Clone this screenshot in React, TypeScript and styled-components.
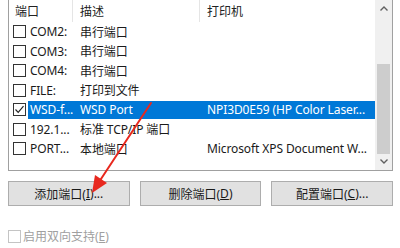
import React from 'react';
import styled, { createGlobalStyle } from 'styled-components';

const GlobalStyle = createGlobalStyle`
  html, body {
    margin: 0;
    padding: 0;
    background: #ffffff;
  }
  body {
    font-family: "Segoe UI", "Noto Sans", "Noto Sans CJK SC", sans-serif;
    font-size: 12px;
    color: #1a1a1a;
  }
`;

const Page = styled.div`
  position: relative;
  width: 400px;
  height: 248px;
  overflow: hidden;
  padding: 0 8px 0 8px;
  box-sizing: border-box;
`;

const ListBox = styled.div`
  display: flex;
  width: 385px;
  height: 171px;
  box-sizing: border-box;
  border: 1px solid #a0a0a0;
  border-top: none;
  background: #fff;
`;

const ListMain = styled.div`
  flex: 1;
  display: flex;
  flex-direction: column;
`;

const HeaderRow = styled.div`
  display: grid;
  grid-template-columns: 64px 127px 1fr;
  height: 22px;
`;

const HeaderCell = styled.div<{ $pad: number; $divider?: boolean }>`
  display: flex;
  align-items: center;
  padding-left: ${(p) => p.$pad}px;
  border-right: ${(p) => (p.$divider ? '1px solid #e5e5e5' : 'none')};
  color: #222;
  white-space: nowrap;
`;

const Row = styled.div`
  display: flex;
  height: 19.5px;
  align-items: center;
`;

const CheckCell = styled.div`
  width: 19px;
  display: flex;
  align-items: center;
  padding-left: 4px;
  box-sizing: border-box;
`;

const Box = styled.span<{ $disabled?: boolean }>`
  display: inline-flex;
  align-items: center;
  justify-content: center;
  width: 13px;
  height: 13px;
  box-sizing: border-box;
  border: 1px solid ${(p) => (p.$disabled ? '#c4c4c4' : '#333')};
  background: #fff;
`;

const RowContent = styled.div<{ $selected?: boolean }>`
  flex: 1;
  display: grid;
  grid-template-columns: 45px 127px 1fr;
  height: 18px;
  align-items: center;
  letter-spacing: -0.1px;
  background: ${(p) => (p.$selected ? '#0078d7' : 'transparent')};
  color: ${(p) => (p.$selected ? '#ffffff' : '#1a1a1a')};
`;

const Cell = styled.div<{ $pad: number }>`
  padding-left: ${(p) => p.$pad}px;
  white-space: nowrap;
  overflow: hidden;
`;

const ScrollBar = styled.div`
  width: 17px;
  background: #f0f0f0;
  display: flex;
  flex-direction: column;
  align-items: center;
`;

const ScrollArrow = styled.div`
  height: 17px;
  width: 17px;
  display: flex;
  align-items: center;
  justify-content: center;
`;

const ScrollTrack = styled.div`
  flex: 1;
  width: 100%;
  display: flex;
  flex-direction: column;
`;

const Thumb = styled.div`
  margin-top: 47px;
  height: 90px;
  margin-left: 2px;
  width: 13px;
  background: #cdcdcd;
`;

const ButtonBar = styled.div`
  display: grid;
  grid-template-columns: repeat(3, 1fr);
  gap: 10px;
  width: 385px;
  margin-top: 10px;
`;

const Button = styled.div`
  height: 25px;
  box-sizing: border-box;
  border: 1px solid #adadad;
  background: #e1e1e1;
  display: flex;
  align-items: center;
  justify-content: center;
  color: #1a1a1a;
  white-space: nowrap;
`;

const OptionRow = styled.div`
  display: flex;
  align-items: center;
  gap: 2px;
  margin-top: 21px;
  color: #a0a0a0;
`;

const ArrowOverlay = styled.svg`
  position: absolute;
  left: 0;
  top: 0;
  pointer-events: none;
`;

type Port = { name: string; desc: string; printer: string; checked?: boolean; selected?: boolean };

const ports: Port[] = [
  { name: 'COM2:', desc: '串行端口', printer: '' },
  { name: 'COM3:', desc: '串行端口', printer: '' },
  { name: 'COM4:', desc: '串行端口', printer: '' },
  { name: 'FILE:', desc: '打印到文件', printer: '' },
  { name: 'WSD-f...', desc: 'WSD Port', printer: 'NPI3D0E59 (HP Color Laser...', checked: true, selected: true },
  { name: '192.1...', desc: '标准 TCP/IP 端口', printer: '' },
  { name: 'PORT...', desc: '本地端口', printer: 'Microsoft XPS Document W...' },
];

const Check = () => (
  <svg width="11" height="11" viewBox="0 0 11 11">
    <path d="M1.5 5.5 L4.2 8.3 L9.5 2.2" fill="none" stroke="#222" strokeWidth="1.2" />
  </svg>
);

const Chevron = ({ up }: { up?: boolean }) => (
  <svg width="8" height="5" viewBox="0 0 8 5">
    <path d={up ? 'M0.5 4.5 L4 1 L7.5 4.5' : 'M0.5 0.5 L4 4 L7.5 0.5'} fill="none" stroke="#606060" strokeWidth="1.4" />
  </svg>
);

export default function App() {
  return (
    <>
      <GlobalStyle />
      <Page>
        <ListBox>
          <ListMain>
            <HeaderRow>
              <HeaderCell $pad={6} $divider>端口</HeaderCell>
              <HeaderCell $pad={7} $divider>描述</HeaderCell>
              <HeaderCell $pad={7}>打印机</HeaderCell>
            </HeaderRow>
            {ports.map((p) => (
              <Row key={p.name}>
                <CheckCell>
                  <Box>{p.checked && <Check />}</Box>
                </CheckCell>
                <RowContent $selected={p.selected}>
                  <Cell $pad={2}>{p.name}</Cell>
                  <Cell $pad={7}>{p.desc}</Cell>
                  <Cell $pad={7}>{p.printer}</Cell>
                </RowContent>
              </Row>
            ))}
          </ListMain>
          <ScrollBar>
            <ScrollArrow>
              <Chevron up />
            </ScrollArrow>
            <ScrollTrack>
              <Thumb />
            </ScrollTrack>
            <ScrollArrow>
              <Chevron />
            </ScrollArrow>
          </ScrollBar>
        </ListBox>
        <ButtonBar>
          <Button>
            添加端口(<u>I</u>)...
          </Button>
          <Button>
            删除端口(<u>D</u>)
          </Button>
          <Button>
            配置端口(<u>C</u>)...
          </Button>
        </ButtonBar>
        <OptionRow>
          <Box $disabled />
          <span>
            启用双向支持(<u>E</u>)
          </span>
        </OptionRow>
        <ArrowOverlay width="400" height="248" viewBox="0 0 400 248">
          <line x1="151" y1="103" x2="99" y2="182" stroke="#e8281e" strokeWidth="2" strokeLinecap="round" />
          <polygon points="92,193 95,175 107,183" fill="#e8281e" />
        </ArrowOverlay>
      </Page>
    </>
  );
}
